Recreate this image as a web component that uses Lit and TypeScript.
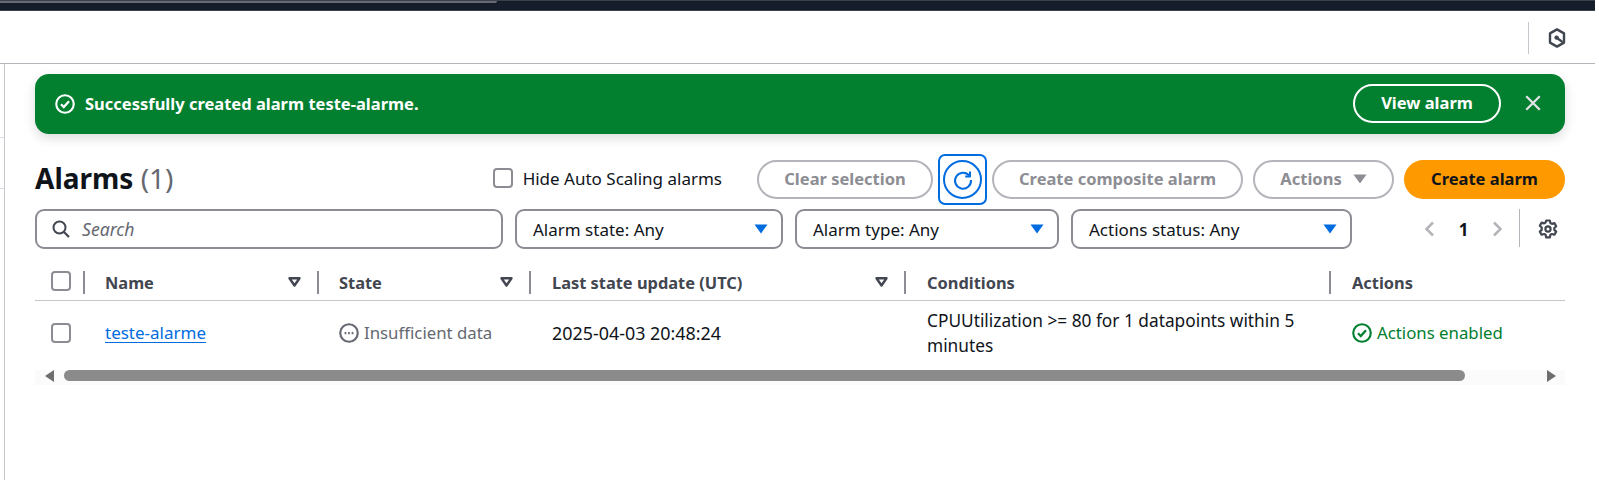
import { LitElement, css, html, svg } from 'lit'
import { customElement } from 'lit/decorators.js'

const checkCircle = svg`<circle cx="8" cy="8" r="7" fill="none" stroke="currentColor" stroke-width="1.7"/><path d="M4.8 8.2l2.2 2.2 4.2-4.6" fill="none" stroke="currentColor" stroke-width="1.8"/>`

@customElement('app-root')
export class AppRoot extends LitElement {
   static styles = css`
      :host {
         display: block;
         width: 1599px;
         height: 480px;
         overflow: hidden;
         background: #fff;
         color: #0f141a;
         font-family: "Noto Sans", "Open Sans", sans-serif;
         font-size: 17px;
      }

      .topbar {
         width: 1595px;
         height: 11px;
         box-sizing: border-box;
         background: #161d2a;
         border-top: 1px solid #3c4149;
         border-bottom: 1px solid #3c4149;
      }

      .tabline {
         width: 497px;
         height: 2px;
         background: #666b73;
         border-bottom-right-radius: 3px;
      }

      .nav {
         width: 1595px;
         height: 53px;
         box-sizing: border-box;
         border-bottom: 1px solid #b4b4bb;
         display: flex;
         justify-content: flex-end;
         align-items: center;
         padding-right: 29px;
      }

      .nav-divider {
         width: 1px;
         height: 32px;
         background: #c6c6cd;
         margin-right: 19px;
         margin-top: 2px;
      }

      .nav svg { width: 18px; height: 20px; margin-top: 1px; }

      .layout {
         display: flex;
         height: 416px;
      }

      .rail {
         width: 5px;
         flex: none;
         box-sizing: border-box;
         border-right: 1px solid #c6c6cd;
      }

      .rail div {
         height: 73px;
         border-bottom: 1px solid #dcdce0;
      }

      .rail div + div { height: 50px; }

      .main {
         width: 1530px;
         margin-left: 30px;
         padding-top: 10px;
      }

      .flash {
         height: 60px;
         box-sizing: border-box;
         background: #037f30;
         border-radius: 14px;
         box-shadow: 0 4px 12px rgba(0, 7, 22, 0.14);
         color: #fff;
         display: flex;
         align-items: center;
         padding: 0 23px 0 20px;
      }

      .flash .icon { width: 20px; height: 20px; margin-right: 10px; }

      .flash-text {
         flex: 1;
         font-weight: 700;
         font-size: 16.5px;
         padding-bottom: 1px;
      }

      .btn {
         box-sizing: border-box;
         height: 39px;
         border: 2px solid #b4b4bb;
         border-radius: 20px;
         background: none;
         color: #8d8d94;
         font: 700 16.5px "Noto Sans", sans-serif;
         display: flex;
         align-items: center;
         justify-content: center;
         padding: 0 0 2px;
      }

      .view {
         width: 148px;
         border-color: #fff;
         color: #fff;
         margin: -2px 23px 0 0;
      }

      .close { width: 18px; height: 18px; color: #e4e4e8; margin-top: -2px; }

      .toolbar {
         display: flex;
         align-items: center;
         margin-top: 26px;
         height: 39px;
      }

      h1 {
         margin: 0 0 3px;
         flex: 1;
         font-size: 28px;
         font-weight: 700;
      }

      h1 span { font-weight: 400; color: #656871; }

      .box {
         width: 20px;
         height: 20px;
         flex: none;
         box-sizing: border-box;
         border: 2px solid #8c8c94;
         border-radius: 4px;
      }

      .hide {
         display: flex;
         align-items: center;
         gap: 10px;
         margin-right: 35px;
         padding-bottom: 3px;
      }

      .actions { display: flex; align-items: center; gap: 10px; }

      .clear { width: 176px; }
      .composite { width: 251px; }
      .menu { width: 141px; gap: 11px; }

      .refresh-wrap { position: relative; }

      .refresh-wrap::after {
         content: '';
         position: absolute;
         inset: -6px -5px;
         border: 2px solid #006ce0;
         border-radius: 7px;
      }

      .refresh {
         width: 39px;
         border-color: #006ce0;
         color: #006ce0;
         padding: 0;
      }

      .refresh svg { width: 22px; height: 22px; }

      .create {
         width: 161px;
         border: none;
         background: #ff9900;
         color: #0f141a;
      }

      .filters {
         display: flex;
         align-items: center;
         gap: 12px;
         margin-top: 10px;
         height: 40px;
      }

      .input, .select {
         height: 40px;
         box-sizing: border-box;
         border: 2px solid #8c8c94;
         border-radius: 9px;
         display: flex;
         align-items: center;
      }

      .input {
         width: 468px;
         padding-left: 15px;
         font-style: italic;
         color: #656871;
         font-size: 17.6px;
      }

      .input svg { width: 18px; height: 18px; margin-right: 12px; color: #424650; }

      .select {
         padding: 0 13px 0 16px;
         justify-content: space-between;
      }

      .select svg { width: 14px; height: 10px; color: #006ce0; }

      .pager {
         flex: 1;
         display: flex;
         justify-content: flex-end;
         align-items: center;
         padding-right: 7px;
      }

      .pager .chev { width: 12px; height: 18px; color: #b4b4bb; }

      .page-no {
         width: 57px;
         text-align: center;
         font-weight: 700;
      }

      .pager-divider {
         width: 1px;
         height: 38px;
         background: #b4b4bb;
         margin: 0 18px 2px 15px;
      }

      .gear { width: 20px; height: 20px; color: #424650; }

      .row {
         display: grid;
         grid-template-columns: 49px 234px 212px 375px 425px 235px;
      }

      .head {
         margin-top: 13px;
         height: 39px;
         box-sizing: border-box;
         padding-top: 9px;
         border-bottom: 1px solid #c6c6cd;
         color: #424650;
         font-weight: 700;
         font-size: 16.4px;
      }

      .head > div {
         height: 23px;
         display: flex;
         align-items: center;
         justify-content: space-between;
         padding: 0 17px 1px 21px;
         border-left: 2px solid #8c8c94;
         margin-left: -1px;
         box-sizing: border-box;
      }

      .head > div:first-child {
         border-left: none;
         padding: 0 0 0 16px;
         margin: 0;
         border-right: 1px solid #c6c6cd;
         width: 50px;
         align-items: flex-start;
      }

      .head > div:nth-child(2),
      .head > div:nth-child(3) { padding-left: 20px; }

      .head .sort { width: 13px; height: 10px; color: #424650; }

      .body {
         height: 69px;
         box-sizing: border-box;
         padding-bottom: 6px;
         align-items: center;
      }

      .body > div { padding-left: 22px; }
      .body > div:first-child { padding-left: 16px; }
      .body > div:nth-child(2),
      .body > div:nth-child(3) { padding-left: 21px; }

      a {
         color: #006ce0;
         text-decoration: underline;
         text-underline-offset: 3px;
      }

      .date { font-size: 17.9px; }

      .status { display: flex; align-items: center; gap: 5px; color: #656871; font-size: 16.8px; }
      .status.ok { color: #00802f; }
      .status svg { width: 20px; height: 20px; }

      .cond { line-height: 25px; width: 400px; font-size: 17.3px; }

      .scrollbar {
         height: 15px;
         background: #fbfbfb;
         display: flex;
         align-items: flex-start;
      }

      .scrollbar svg { width: 10px; height: 12px; flex: none; color: #6e6e6e; }

      .thumb {
         width: 1401px;
         height: 11px;
         background: #8b8b8b;
         border-radius: 6px;
         margin: 0 81px 0 9px;
      }

      .scrollbar svg:first-child { margin-left: 10px; }
   `

   sortIcon() {
      return html`<svg class="sort" viewBox="0 0 13 10"><path d="M1.5 1.2h10L6.5 8.5z" fill="none" stroke="currentColor" stroke-width="2.4" stroke-linejoin="round"/></svg>`
   }

   caret() {
      return html`<svg viewBox="0 0 14 10"><path d="M0.5 0.5h13L7 9.5z" fill="currentColor"/></svg>`
   }

   select(label: string, width: number) {
      return html`<div class="select" style="width:${width}px"><span>${label}</span>${this.caret()}</div>`
   }

   headCell(label: string, sort = true) {
      return html`<div><span>${label}</span>${sort ? this.sortIcon() : ''}</div>`
   }

   render() {
      return html`
         <div class="topbar"><div class="tabline"></div></div>
         <div class="nav">
            <div class="nav-divider"></div>
            <svg viewBox="0 0 18 20">
               <path d="M9 1.4l7 4v9.2l-7 4-7-4V5.4z" fill="none" stroke="#414750" stroke-width="2.4" stroke-linejoin="round"/>
               <circle cx="8.6" cy="9.6" r="2.2" fill="#414750"/>
               <path d="M9 10l5.5 4" stroke="#414750" stroke-width="2.2"/>
            </svg>
         </div>
         <div class="layout">
            <div class="rail"><div></div><div></div></div>
            <div class="main">
               <div class="flash">
                  <svg class="icon" viewBox="0 0 16 16">${checkCircle}</svg>
                  <div class="flash-text">Successfully created alarm teste-alarme.</div>
                  <button class="btn view">View alarm</button>
                  <svg class="close" viewBox="0 0 16 16"><path d="M2 2l12 12M14 2L2 14" stroke="currentColor" stroke-width="2" fill="none"/></svg>
               </div>

               <div class="toolbar">
                  <h1>Alarms <span>(1)</span></h1>
                  <div class="hide"><div class="box"></div>Hide Auto Scaling alarms</div>
                  <div class="actions">
                     <button class="btn clear">Clear selection</button>
                     <div class="refresh-wrap">
                        <button class="btn refresh">
                           <svg viewBox="0 0 22 22"><path d="M17.2 6.6A8 8 0 1 0 19 11" fill="none" stroke="currentColor" stroke-width="2"/><path d="M18 2.6v4.8h-4.8" fill="none" stroke="currentColor" stroke-width="2" stroke-linejoin="round"/></svg>
                        </button>
                     </div>
                     <button class="btn composite">Create composite alarm</button>
                     <button class="btn menu">Actions
                        <svg width="14" height="10" viewBox="0 0 14 10"><path d="M0.5 0.5h13L7 9.5z" fill="currentColor"/></svg>
                     </button>
                     <button class="btn create">Create alarm</button>
                  </div>
               </div>

               <div class="filters">
                  <div class="input">
                     <svg viewBox="0 0 18 18"><circle cx="7.5" cy="7.5" r="6" fill="none" stroke="currentColor" stroke-width="2"/><path d="M12 12l5 5" stroke="currentColor" stroke-width="2.2"/></svg>
                     Search
                  </div>
                  ${this.select('Alarm state: Any', 268)}
                  ${this.select('Alarm type: Any', 264)}
                  ${this.select('Actions status: Any', 281)}
                  <div class="pager">
                     <svg class="chev" viewBox="0 0 12 18"><path d="M10 2.5L3.5 9l6.5 6.5" fill="none" stroke="currentColor" stroke-width="2.5"/></svg>
                     <div class="page-no">1</div>
                     <svg class="chev" viewBox="0 0 12 18"><path d="M2 2.5L8.5 9 2 15.5" fill="none" stroke="currentColor" stroke-width="2.5"/></svg>
                     <div class="pager-divider"></div>
                     <svg class="gear" viewBox="0 0 20 20">
                        <path d="M8.2 1.5h3.6l.6 2.5 1.5.9 2.5-.8 1.8 3.1-1.9 1.8v1.9l1.9 1.7-1.8 3.1-2.5-.7-1.5.8-.6 2.6H8.2l-.6-2.6-1.5-.8-2.5.7-1.8-3.1 1.9-1.7V8.5L1.8 6.7l1.8-3.1 2.5.8 1.5-.9z" fill="none" stroke="currentColor" stroke-width="2.2" stroke-linejoin="round"/>
                        <circle cx="10" cy="10" r="2.6" fill="none" stroke="currentColor" stroke-width="2.2"/>
                     </svg>
                  </div>
               </div>

               <div class="row head">
                  <div><div class="box"></div></div>
                  ${this.headCell('Name')}
                  ${this.headCell('State')}
                  ${this.headCell('Last state update (UTC)')}
                  ${this.headCell('Conditions', false)}
                  ${this.headCell('Actions', false)}
               </div>

               <div class="row body">
                  <div><div class="box"></div></div>
                  <div><a href="#">teste-alarme</a></div>
                  <div class="status">
                     <svg viewBox="0 0 16 16"><circle cx="8" cy="8" r="7" fill="none" stroke="currentColor" stroke-width="1.7"/><path d="M4.5 8h1.4M7.3 8h1.4M10.1 8h1.4" stroke="currentColor" stroke-width="1.8"/></svg>
                     Insufficient data
                  </div>
                  <div class="date">2025-04-03 20:48:24</div>
                  <div class="cond">CPUUtilization >= 80 for 1 datapoints within 5 minutes</div>
                  <div class="status ok">
                     <svg viewBox="0 0 16 16">${checkCircle}</svg>
                     Actions enabled
                  </div>
               </div>

               <div class="scrollbar">
                  <svg viewBox="0 0 10 12"><path d="M9 0v12L0 6z" fill="currentColor"/></svg>
                  <div class="thumb"></div>
                  <svg viewBox="0 0 10 12"><path d="M1 0v12l9-6z" fill="currentColor"/></svg>
               </div>
            </div>
         </div>
      `
   }
}
